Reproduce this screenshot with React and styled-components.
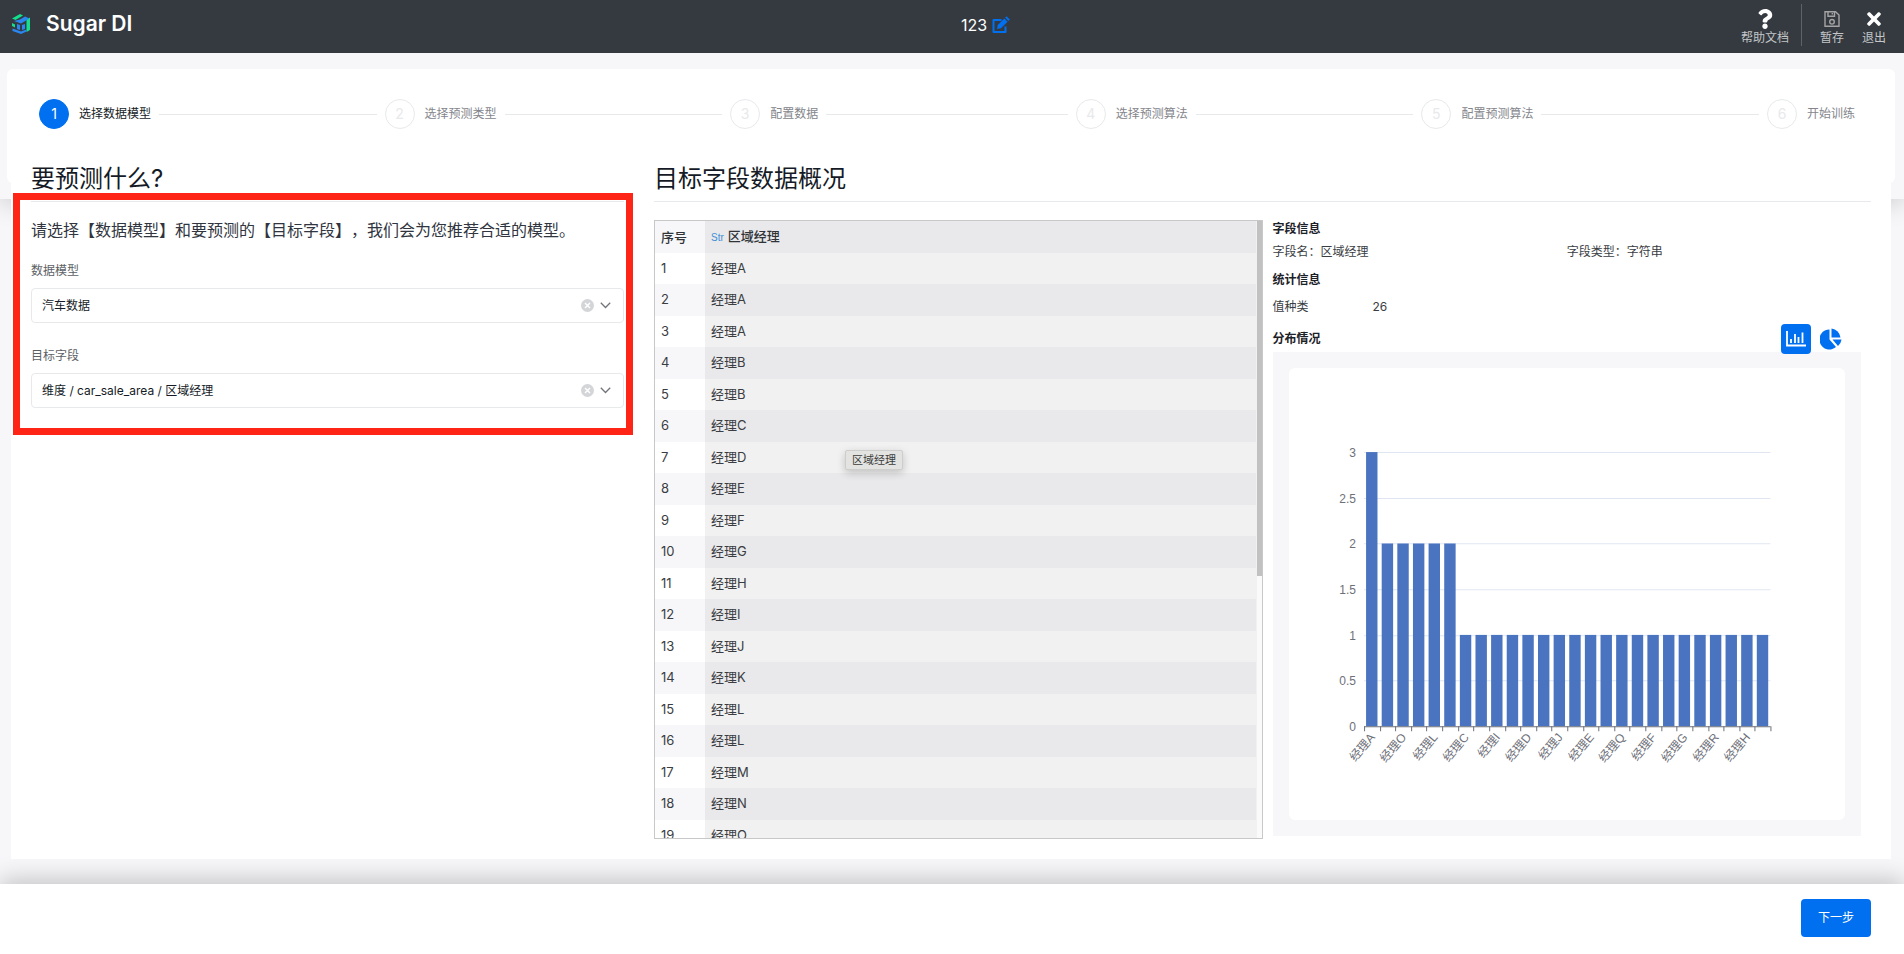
import { useState } from "react";
import styled, { createGlobalStyle } from "styled-components";
import { FaQuestion, FaTimes } from "react-icons/fa";

const GlobalStyle = createGlobalStyle`
	*, *::before, *::after {
		box-sizing: border-box;
	}
	body {
		margin: 0;
		background: #f7f7fa;
		color: #151b26;
		font: 12px/20px Inter, "Noto Sans CJK SC", sans-serif;
		text-spacing-trim: space-all;
	}
	h1, h2, h3, p, ol, dl, dd {
		margin: 0;
		padding: 0;
	}
	button, select {
		font: inherit;
		color: inherit;
		border: 0;
		padding: 0;
		background: none;
		cursor: pointer;
	}
`;

const Page = styled.div`
	min-height: 100vh;
	display: flex;
	flex-direction: column;
`;

const Top = styled.div`
	height: 199px;
	background: #f7f7fa;
	box-shadow: 0 4px 24px rgba(0, 0, 0, 0.18);
`;

const TopBar = styled.header`
	height: 53px;
	padding: 0 12px 0 11px;
	background: #343a40;
	color: #fff;
	display: grid;
	grid-template-columns: 1fr auto 1fr;
	align-items: center;
`;

const Brand = styled.a`
	display: flex;
	align-items: center;
	gap: 15px;
	color: inherit;
	text-decoration: none;
	font-size: 21px;
	font-weight: 600;
	padding-bottom: 5px;
`;

const ProjectName = styled.div`
	display: flex;
	align-items: center;
	gap: 5px;
	font-size: 16px;
	padding: 0 0 4px 68px;
	button {
		display: flex;
		color: #0070f0;
	}
`;

const Actions = styled.nav`
	display: flex;
	justify-content: flex-end;
	align-items: center;
	padding-top: 2px;
`;

const Action = styled.button`
	display: flex;
	flex-direction: column;
	align-items: center;
	padding: 0 ${(props) => (props.$wide ? 12 : 6)}px;
	margin-left: ${(props) => (props.$wide ? 0 : 6)}px;
	color: #c4c6c8;
	line-height: 18px;
	svg {
		width: 18px;
		height: 20px;
		color: ${(props) => (props.$dim ? "#a5a3a3" : "#fff")};
	}
`;

const ActionDivider = styled.span`
	width: 1px;
	height: 42px;
	margin: 0 6px 6px 0;
	background: #5f6367;
`;

const StepsCard = styled.div`
	height: 114px;
	margin: 16px 9px 0 7px;
	padding: 30px 40px 0 32px;
	background: #fff;
	border-radius: 6px;
`;

const Steps = styled.ol`
	display: flex;
	list-style: none;
`;

const Step = styled.li`
	display: flex;
	align-items: center;
	flex: 1;
	gap: 8px;
	color: ${(props) => (props.$active ? "#151b26" : "#84868c")};
	&::after {
		content: "";
		flex: 1;
		height: 1px;
		margin-right: 8px;
		background: #e8e9eb;
	}
	&:last-child {
		flex: none;
		&::after {
			display: none;
		}
	}
`;

const StepNumber = styled.span`
	width: 30px;
	height: 30px;
	margin-right: 2px;
	border: 1px solid ${(props) => (props.$active ? "#0070f0" : "#e8e9eb")};
	border-radius: 50%;
	background: ${(props) => (props.$active ? "#0070f0" : "#fff")};
	color: ${(props) => (props.$active ? "#fff" : "#e8e9eb")};
	font-size: 14px;
	line-height: 28px;
	text-align: center;
`;

const Panel = styled.main`
	position: relative;
	display: grid;
	grid-template-columns: 593fr 1217fr;
	gap: 30px;
	margin: -39px 13px 0 11px;
	padding: 0 20px 20px;
	background: #fff;
`;

const SectionTitle = styled.h2`
	height: 42px;
	border-bottom: 1px solid #e8e9eb;
	font-size: 24px;
	font-weight: 400;
	line-height: 38px;
`;

const Setup = styled.section`
	position: relative;
`;

const Highlight = styled.div`
	position: absolute;
	top: 33px;
	right: -9px;
	left: -18px;
	height: 242px;
	border: 7px solid #ff2516;
	pointer-events: none;
`;

const Intro = styled.p`
	margin: 16px 0 19px;
	color: #303540;
	font-size: 16px;
	line-height: 24px;
`;

const Field = styled.div`
	margin-bottom: 23px;
	label {
		display: block;
		margin-bottom: 7px;
		color: #5c5f66;
	}
`;

const SelectBox = styled.div`
	position: relative;
	select {
		appearance: none;
		display: block;
		width: 100%;
		height: 35px;
		padding: 0 48px 0 10px;
		border: 1px solid #e8e9eb;
		border-radius: 4px;
	}
`;

const SelectIcons = styled.div`
	position: absolute;
	top: 11px;
	right: 13px;
	display: flex;
	align-items: center;
	gap: 6px;
	button {
		display: flex;
	}
	svg {
		display: block;
	}
`;

const Overview = styled.section`
	min-width: 0;
`;

const OverviewBody = styled.div`
	display: grid;
	grid-template-columns: 1fr 1fr;
	margin-top: 18px;
`;

const TableFrame = styled.div`
	position: relative;
	display: flex;
	height: 619px;
	border: 1px solid #c8c8c8;
`;

const TableScroll = styled.div`
	flex: 1;
	overflow: hidden;
`;

const DataTable = styled.table`
	width: 100%;
	border-collapse: collapse;
	color: #3a3d42;
	font-size: 13px;
	th, td {
		height: 31px;
		padding: 0 6px;
		text-align: left;
	}
	td {
		padding-bottom: 2px;
	}
	thead th, tr:nth-child(even) td {
		height: 32px;
		background: #f7f7f9;
	}
	th:first-child {
		width: 50px;
	}
	td + td {
		background: #f1f1f1;
	}
	thead th + th, tr:nth-child(even) td + td {
		background: #e9e9eb;
	}
	th {
		font-weight: 500;
		color: #303338;
	}
`;

const TypeTag = styled.span`
	margin-right: 4px;
	color: #3f8fd6;
	font: 10px/20px "Liberation Sans", Arial, sans-serif;
`;

const ScrollTrack = styled.div`
	width: 6px;
	border-left: 1px solid #f1f1f1;
	background: #fafafa;
`;

const ScrollThumb = styled.div`
	height: 355px;
	background: #c1c1c1;
`;

const Tooltip = styled.div`
	position: absolute;
	top: 229px;
	left: 190px;
	padding: 0 6px;
	border: 1px solid #cdcdcc;
	border-radius: 2px;
	background: #e3e3e1;
	box-shadow: 0 3px 8px rgba(0, 0, 0, 0.2);
	color: #3c3c3c;
	font-size: 11px;
	line-height: 18px;
`;

const Info = styled.div`
	padding: 0 10px;
	color: #3a3d42;
	h3 {
		color: #1d2128;
		font-size: 12px;
		font-weight: 600;
		line-height: 18px;
	}
`;

const FieldFacts = styled.dl`
	display: grid;
	grid-template-columns: 1fr 1fr;
	margin: 4px 0 9px;
	div {
		display: flex;
	}
`;

const Stats = styled.dl`
	display: flex;
	margin: 8px 0 7px;
	dt {
		width: 100px;
	}
`;

const ChartHead = styled.div`
	position: relative;
	display: flex;
	justify-content: space-between;
	align-items: center;
	height: 30px;
	padding-right: 16px;
	margin-bottom: -2px;
`;

const ChartTabs = styled.div`
	display: flex;
	align-items: center;
	gap: 6px;
`;

const ChartTab = styled.button`
	display: flex;
	align-items: center;
	justify-content: center;
	width: ${(props) => (props.$active ? 30 : 28)}px;
	height: 30px;
	border-radius: 4px;
	background: ${(props) => (props.$active ? "#0070f0" : "transparent")};
	color: ${(props) => (props.$active ? "#fff" : "#0070f0")};
`;

const ChartFrame = styled.div`
	padding: 16px;
	background: #f7f7f9;
	svg {
		display: block;
		width: 100%;
		height: auto;
		border-radius: 6px;
		background: #fff;
	}
`;

const Footer = styled.footer`
	flex: 1;
	display: flex;
	justify-content: flex-end;
	align-items: flex-start;
	margin-top: 25px;
	padding: 15px 33px;
	background: #fff;
	box-shadow: 0 -4px 24px rgba(0, 0, 0, 0.22);
`;

const PrimaryButton = styled.button`
	width: 70px;
	height: 38px;
	border-radius: 4px;
	background: #0070f0;
	color: #fff;
`;

const STEPS = ["选择数据模型", "选择预测类型", "配置数据", "选择预测算法", "配置预测算法", "开始训练"];

const ROWS = "AAABBCDEFGHIJKLLMNOOPPQRSSTUVWXYZ".split("");

// the table frame has room for this many rows, the last one partly
const VISIBLE_ROWS = 19;

// letter of each manager, in the order of the bars
const BARS = "ABOPLSCKIMDNJTEUQVFWGXRYHZ".split("").map((letter) => ({
	name: `经理${letter}`,
	count: ROWS.filter((row) => row === letter).length,
}));

const CHART = { left: 75, right: 481, top: 84, bottom: 358 };

function Logo() {
	return (
		<svg width="20" height="21" viewBox="0 0 20 21">
			<path d="M1 4.5 9 0l3 1.5L4.500 6z" fill="#12e08c" />
			<path d="M15.500 5.500 19 3.500V16l-3.500 2z" fill="#12e08c" />
			<path d="M1 9l3 1.500v3L1 12z" fill="#12e08c" />
			<path
				d="M3 7l7 2.500 8.500-5L14 2.500 9 5.500M1.500 14.500v2.500L10 20l5.500-2.500v-2L10 17.500z"
				fill="#2b87f0"
			/>
			<path d="M6 10l3 1v5l-3-1zM11 11l3-1v5l-3 1z" fill="#2b87f0" />
		</svg>
	);
}

function EditIcon() {
	return (
		<svg width="18" height="18" viewBox="0 0 18 18">
			<path
				d="M9.500 4H1.500v12h12v-5.500"
				fill="none"
				stroke="currentColor"
				strokeWidth="2"
				strokeLinejoin="round"
			/>
			<path d="M5 13l.7-4 6.600-6.600 3.300 3.300L9 12.300z" fill="currentColor" />
			<path d="M13.100 1.600 14.600 0.200 17.800 3.400 16.400 4.900z" fill="currentColor" />
		</svg>
	);
}

function SaveIcon() {
	return (
		<svg viewBox="0 0 18 20" fill="none" stroke="currentColor" strokeWidth="1.400">
			<path d="M2 2.700h10.500L16 6v11.300H2z" />
			<path d="M5 3v4.200h6.500V3M9.300 4v1.500" />
			<circle cx="9" cy="12.800" r="2.300" />
		</svg>
	);
}

function BarIcon() {
	return (
		<svg width="20" height="16" viewBox="0 0 20 16" fill="none" stroke="currentColor" strokeWidth="1.800">
			<path d="M1 0v14.500h19M5 12V8M9 12V3M12.500 12V6M16.500 12V1.500" />
		</svg>
	);
}

function PieIcon() {
	return (
		<svg width="22" height="22" viewBox="0 0 22 22" fill="currentColor">
			<path d="M9.500 1.500v10l6.500 7.500A10 10 0 1 1 9.500 1.500z" />
			<path d="M11.500 0.500a10 10 0 0 1 9 9h-9z" />
			<path d="M12.500 11.500h9a10 10 0 0 1-3.500 6.500z" />
		</svg>
	);
}

function SelectField(props) {
	const [value, setValue] = useState(props.value);
	return (
		<Field>
			<label htmlFor={props.id}>{props.label}</label>
			<SelectBox>
				<select
					id={props.id}
					value={value}
					onChange={(event) => setValue(event.target.value)}
				>
					<option value="" hidden></option>
					<option>{props.value}</option>
				</select>
				<SelectIcons>
					<button type="button" onClick={() => setValue("")}>
						<svg width="13" height="13" viewBox="0 0 13 13">
							<circle cx="6.500" cy="6.500" r="6.500" fill="#d4d5d8" />
							<path d="M4 4l5 5M9 4l-5 5" stroke="#fff" strokeWidth="1.500" />
						</svg>
					</button>
					<svg width="11" height="7" viewBox="0 0 11 7" fill="none" stroke="#70747a" strokeWidth="1.300">
						<path d="M.8.8 5.500 5.500 10.200.8" />
					</svg>
				</SelectIcons>
			</SelectBox>
		</Field>
	);
}

function BarChart() {
	const { left, right, top, bottom } = CHART;
	const band = (right - left) / BARS.length;
	const unit = (bottom - top) / 3;
	return (
		<svg
			viewBox="0 0 556 452"
			fill="#6e7079"
			fontSize="12"
			fontFamily='"Liberation Sans", "Noto Sans CJK SC", sans-serif'
		>
			{[0, 0.5, 1, 1.5, 2, 2.5, 3].map((tick) => {
				const y = Math.round(bottom - tick * unit) + 0.5;
				return (
					<g key={tick}>
						{tick ? <path d={`M${left} ${y}H${right}`} stroke="#e0e6f1" /> : null}
						<text x={left - 8} y={y + 4} textAnchor="end">
							{tick}
						</text>
					</g>
				);
			})}
			{BARS.map((bar, index) => (
				<rect
					key={bar.name}
					x={left + index * band + 2}
					y={bottom - bar.count * unit}
					width="11.4"
					height={bar.count * unit}
					fill="#4a74c0"
				/>
			))}
			<path d={`M${left} ${bottom + 0.5}H${right}`} stroke="#6e7079" />
			{Array.from({ length: BARS.length + 1 }, (_, index) => {
				const x = Math.round(left + index * band) + 0.5;
				return <path key={index} d={`M${x} ${bottom}v5`} stroke="#6e7079" />;
			})}
			{BARS.map((bar, index) =>
				index % 2 ? null : (
					<text
						key={bar.name}
						transform={`translate(${left + (index + 0.5) * band} ${bottom + 8}) rotate(-50)`}
						y="5"
						textAnchor="end"
					>
						{bar.name}
					</text>
				)
			)}
		</svg>
	);
}

function App() {
	const [chart, setChart] = useState("bar");
	return (
		<Page>
			<GlobalStyle />
			<Top>
				<TopBar>
					<Brand href="#">
						<Logo />
						Sugar DI
					</Brand>
					<ProjectName>
						123
						<button type="button">
							<EditIcon />
						</button>
					</ProjectName>
					<Actions>
						<Action $wide>
							<FaQuestion />
							帮助文档
						</Action>
						<ActionDivider />
						<Action $dim>
							<SaveIcon />
							暂存
						</Action>
						<Action>
							<FaTimes />
							退出
						</Action>
					</Actions>
				</TopBar>
				<StepsCard>
					<Steps>
						{STEPS.map((name, index) => (
							<Step key={name} $active={index === 0}>
								<StepNumber $active={index === 0}>{index + 1}</StepNumber>
								{name}
							</Step>
						))}
					</Steps>
				</StepsCard>
			</Top>

			<Panel>
				<Setup>
					<SectionTitle>要预测什么?</SectionTitle>
					<Intro>请选择【数据模型】和要预测的【目标字段】，我们会为您推荐合适的模型。</Intro>
					<SelectField id="model" label="数据模型" value="汽车数据" />
					<SelectField id="target" label="目标字段" value="维度 / car_sale_area / 区域经理" />
					<Highlight />
				</Setup>

				<Overview>
					<SectionTitle>目标字段数据概况</SectionTitle>
					<OverviewBody>
						<TableFrame>
							<TableScroll>
								<DataTable>
									<thead>
										<tr>
											<th>序号</th>
											<th>
												<TypeTag>Str</TypeTag>
												区域经理
											</th>
										</tr>
									</thead>
									<tbody>
										{ROWS.slice(0, VISIBLE_ROWS).map((letter, index) => (
											<tr key={index}>
												<td>{index + 1}</td>
												<td>经理{letter}</td>
											</tr>
										))}
									</tbody>
								</DataTable>
							</TableScroll>
							<ScrollTrack>
								<ScrollThumb />
							</ScrollTrack>
							<Tooltip role="tooltip">区域经理</Tooltip>
						</TableFrame>

						<Info>
							<h3>字段信息</h3>
							<FieldFacts>
								<div>
									<dt>字段名：</dt>
									<dd>区域经理</dd>
								</div>
								<div>
									<dt>字段类型：</dt>
									<dd>字符串</dd>
								</div>
							</FieldFacts>
							<h3>统计信息</h3>
							<Stats>
								<dt>值种类</dt>
								<dd>{BARS.length}</dd>
							</Stats>
							<ChartHead>
								<h3>分布情况</h3>
								<ChartTabs>
									<ChartTab $active={chart === "bar"} onClick={() => setChart("bar")}>
										<BarIcon />
									</ChartTab>
									<ChartTab $active={chart === "pie"} onClick={() => setChart("pie")}>
										<PieIcon />
									</ChartTab>
								</ChartTabs>
							</ChartHead>
							<ChartFrame>
								<BarChart />
							</ChartFrame>
						</Info>
					</OverviewBody>
				</Overview>
			</Panel>

			<Footer>
				<PrimaryButton type="button">下一步</PrimaryButton>
			</Footer>
		</Page>
	);
}

export default App;
